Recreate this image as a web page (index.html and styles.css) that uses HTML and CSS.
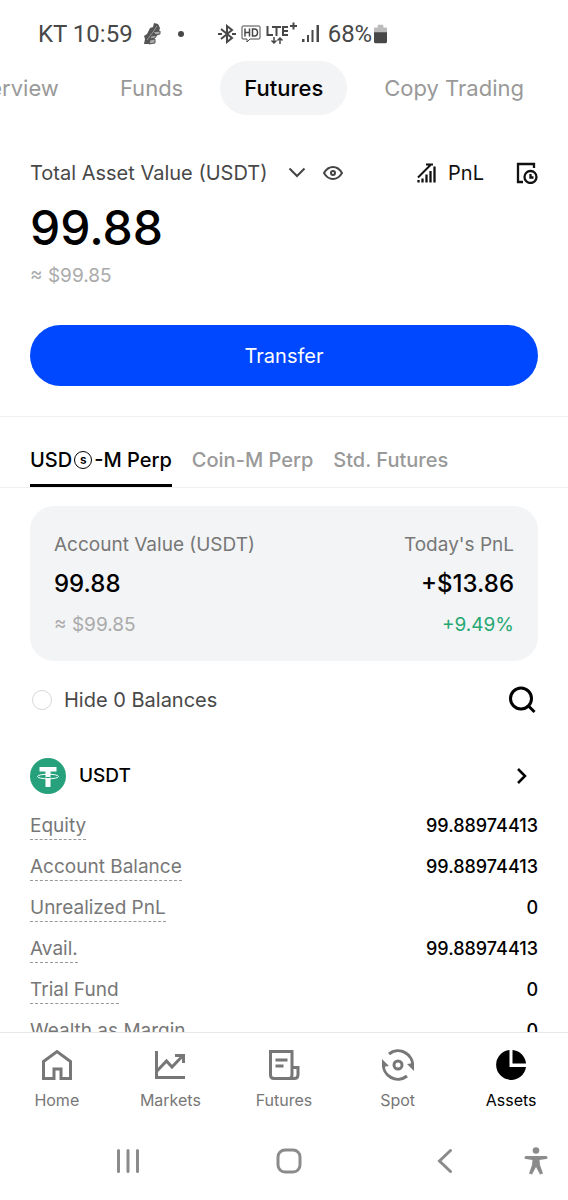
FILE: index.html
```html
<!DOCTYPE html>
<html lang="en">
<head>
<meta charset="utf-8">
<meta name="viewport" content="width=device-width, initial-scale=1">
<title>Futures assets</title>
<link rel="stylesheet" href="styles.css">
</head>
<body>
<div class="app">
  <header class="status">
    <span class="status-text">KT 10:59</span>
    <svg class="shoe" width="20" height="24" viewBox="0 0 20 24" aria-hidden="true"><path d="M11 1l4 1 2 4-2 6-5 5-2 5H1l1-5-1-3 3-2 3-6 3-1z" fill="#555"/><path d="M10 10l7-1v3l-4 1zM8 14l6-1-2 3-5 1zM7 18l5-1v4l-6 1z" fill="#aaa" stroke="#555"/><path d="M4 18l6-8 4-6" stroke="#999" fill="none"/></svg>
    <span class="dot"></span>
    <span class="status-icons">
      <svg width="18" height="20" viewBox="0 0 18 20" fill="none" stroke="#484848" stroke-width="2" aria-hidden="true"><path d="M3 5l11 9-5 4V2l5 4-11 9"/><path d="M0 10h4M14 10h4"/></svg>
      <svg width="20" height="18" viewBox="0 0 20 18" fill="none" stroke="#484848" aria-hidden="true"><path d="M2 1h16q1 0 1 1v11q0 1-1 1H9l-3 3v-3H2q-1 0-1-1V2q0-1 1-1z"/><path d="M4 3.500v8M8.500 3.500v8M4 7.500h4.500M11.500 4v7h2q3 0 3-3.500t-3-3.500z" stroke-width="1.500"/></svg>
      <svg width="31" height="24" viewBox="0 0 31 24" fill="none" stroke="#484848" stroke-width="2" aria-hidden="true"><path d="M1.500 4v9H7M6 5h9M10.500 5v9M22 5h-5v8h5M17 9h5M24 4h7M27.500 .5v7"/><path d="M8 15v6M5.500 18.500L8 21l2.500-2.500M14 22v-6M11.500 18.500L14 16l2.500 2.500" stroke-width="1.500"/></svg>
      <svg width="17" height="18" viewBox="0 0 17 18" fill="#484848" aria-hidden="true"><path d="M0 14h2.500v3H0zM5 10h2v7H5zM9.500 5h2v12h-2zM14.500 0H17v17h-2.500z"/></svg>
    </span>
    <span class="status-text">68%</span>
    <svg width="13" height="20" viewBox="0 0 14 20" aria-hidden="true"><path d="M1 3h3V0h6v3h3q1 0 1 1v5H0V4q0-1 1-1z" fill="#bbb"/><path d="M0 8h14v10q0 2-2 2H2q-2 0-2-2z" fill="#484848"/></svg>
  </header>

  <nav class="pages" aria-label="Account pages">
    <a href="#overview" class="page">Overview</a>
    <a href="#funds" class="page">Funds</a>
    <a href="#futures" class="page page-on" aria-current="page">Futures</a>
    <a href="#copy" class="page">Copy Trading</a>
  </nav>

  <main class="content">
    <section class="total">
      <div class="total-head">
        <button class="plain total-label" type="button">Total Asset Value (USDT)
          <svg width="18" height="12" viewBox="0 0 18 12" fill="none" stroke="#444" stroke-width="2" aria-hidden="true"><path d="M1.500 1.500L9 9l7.500-7.500"/></svg>
        </button>
        <button class="plain eye" type="button" aria-label="Hide values"><svg width="20" height="16" viewBox="0 0 20 16" fill="none" stroke="#444" stroke-width="2" aria-hidden="true"><path d="M1 8q3.500-6 9-6t9 6q-3.500 6-9 6T1 8z"/><circle cx="10" cy="8" r="2"/></svg></button>
        <button class="plain pnl" type="button">
          <svg width="20" height="20" viewBox="0 0 20 20" fill="none" stroke="#111" aria-hidden="true"><path d="M1 14.500L13.500 2M9 1.500h7" stroke-width="2"/><path d="M1.500 17v2.500M5.500 15.500v4M9.500 11.500v8M13.500 8v11.500M17.500 3.500v16" stroke-width="2.300"/></svg>
          PnL</button>
        <button class="plain" type="button" aria-label="History"><svg width="22" height="22" viewBox="0 0 22 22" fill="none" stroke="#111" stroke-width="2.300" aria-hidden="true"><path d="M18 6V2H2v18h5"/><circle cx="14.500" cy="15" r="6"/><path d="M14.500 12v3.500h3"/></svg></button>
      </div>
      <div class="total-value">99.88</div>
      <div class="approx">≈ $99.85</div>
      <button class="transfer" type="button">Transfer</button>
    </section>

    <nav class="tabs" aria-label="Contract type">
      <a href="#usd" class="tab tab-on" aria-current="true">USD<span class="circled">s</span>-M Perp</a>
      <a href="#coin" class="tab">Coin-M Perp</a>
      <a href="#std" class="tab">Std. Futures</a>
    </nav>

    <section class="card">
      <div>
        <div class="card-label">Account Value (USDT)</div>
        <div class="card-value">99.88</div>
        <div class="approx">≈ $99.85</div>
      </div>
      <div class="card-right">
        <div class="card-label">Today's PnL</div>
        <div class="card-value">+$13.86</div>
        <div class="gain">+9.49%</div>
      </div>
    </section>

    <div class="filter">
      <label class="hide"><input class="check" type="checkbox">Hide 0 Balances</label>
      <button class="plain" type="button" aria-label="Search"><svg width="28" height="28" viewBox="0 0 28 28" fill="none" stroke="#000" stroke-width="3" aria-hidden="true"><circle cx="13" cy="12.500" r="10.500"/><path d="M20 19.500l6.500 6.500"/></svg></button>
    </div>

    <a href="#usdt" class="coin">
      <svg width="36" height="36" viewBox="0 0 36 36" aria-hidden="true"><circle cx="18" cy="18" r="18" fill="#26a17b"/><path d="M9.500 9h17v4.500h-6V29h-5V13.500h-6z" fill="#fff"/><ellipse cx="18" cy="18.500" rx="10.500" ry="2.300" fill="none" stroke="#fff"/><path d="M15.500 19.500h5" stroke="#26a17b"/></svg>
      <span class="coin-name">USDT</span>
      <svg width="12" height="18" viewBox="0 0 12 18" fill="none" stroke="#000" stroke-width="2.500" aria-hidden="true"><path d="M2 2l7 7-7 7"/></svg>
    </a>

    <dl class="details">
      <div class="row"><dt>Equity</dt><dd>99.88974413</dd></div>
      <div class="row"><dt>Account Balance</dt><dd>99.88974413</dd></div>
      <div class="row"><dt>Unrealized PnL</dt><dd>0</dd></div>
      <div class="row"><dt>Avail.</dt><dd>99.88974413</dd></div>
      <div class="row"><dt>Trial Fund</dt><dd>0</dd></div>
      <div class="row"><dt>Wealth as Margin</dt><dd>0</dd></div>
    </dl>
  </main>

  <nav class="bottom" aria-label="Main">
    <a href="#home" class="item"><svg width="32" height="32" viewBox="0 0 32 32" fill="none" stroke="#777" stroke-width="3" aria-hidden="true"><path d="M2.500 12.500L16 2.500l13.500 10v17H20V20h-7v9.500H2.500z"/></svg>Home</a>
    <a href="#markets" class="item"><svg width="32" height="32" viewBox="0 0 32 32" fill="none" stroke="#777" stroke-width="3" aria-hidden="true"><path d="M2.500 2v26.500H31M3 22l9.500-10 5.500 6L28 7.500M21 6.500h8.500V14"/></svg>Markets</a>
    <a href="#trade" class="item"><svg width="32" height="32" viewBox="0 0 32 32" fill="none" stroke="#777" stroke-width="3" aria-hidden="true"><path d="M24 18.500V2.500H2.500V26q0 3.500 3.500 3.500h20q4 0 4-4v-7h-6V26q0 3.500-3 3.500M7.500 11h12M7.500 17h8"/></svg>Futures</a>
    <a href="#spot" class="item"><svg width="32" height="32" viewBox="0 0 32 32" fill="none" stroke="#777" stroke-width="3" aria-hidden="true"><path d="M7 5A14.500 14.500 0 0 1 30.500 18M25 27A14.500 14.500 0 0 1 1.500 14"/><circle cx="16" cy="16" r="4"/><path d="M25 15l7-1v8zM7 17l-7 1v-8z" fill="#777" stroke="none"/></svg>Spot</a>
    <a href="#assets" class="item item-on" aria-current="page"><svg width="32" height="32" viewBox="0 0 32 32" aria-hidden="true"><path d="M14.500 1v17H31A15 15 0 1 1 14.500 1z"/><path d="M17.500 1A15 15 0 0 1 31 14.500H17.500z"/></svg>Assets</a>
  </nav>

  <footer class="system">
    <div class="system-keys">
      <button class="plain" type="button" aria-label="Recent apps"><svg width="24" height="26" viewBox="0 0 24 26" stroke="#8b8b8b" stroke-width="3" stroke-linecap="round" aria-hidden="true"><path d="M2.500 2.500v21M12 2.500v21M21.500 2.500v21"/></svg></button>
      <button class="plain" type="button" aria-label="Home screen"><svg width="26" height="26" viewBox="0 0 26 26" fill="none" stroke="#8b8b8b" stroke-width="3" aria-hidden="true"><rect x="2" y="2" width="22" height="22" rx="7"/></svg></button>
      <button class="plain" type="button" aria-label="Back"><svg width="16" height="26" viewBox="0 0 16 26" fill="none" stroke="#8b8b8b" stroke-width="3" stroke-linecap="round" aria-hidden="true"><path d="M13.500 2.500L2.500 13l11 10.500"/></svg></button>
    </div>
    <button class="plain" type="button" aria-label="Accessibility"><svg width="24" height="28" viewBox="0 0 24 28" fill="#8b8b8b" aria-hidden="true"><circle cx="12" cy="3.500" r="3.300"/><path d="M2 9h20q1.500 0 1.500 1.500T22 12l-6.500 1 .5 5 3 8.500-3 1L12 20l-4 7.500-3-1L8 18l.5-5L2 12Q.5 12 .5 10.500T2 9z"/></svg></button>
  </footer>
</div>
</body>
</html>
```
FILE: styles.css
```css
* { box-sizing: border-box; }
body { margin: 0; background: #fff; color: #000; font-family: Inter, "Liberation Sans", sans-serif; font-size: 20px; line-height: 24px; }
a { color: inherit; text-decoration: none; }
svg { display: block; flex: none; }
.app { display: flex; flex-direction: column; height: 100vh; overflow: hidden; }
.plain { display: flex; align-items: center; padding: 0; border: 0; background: none; color: inherit; font: inherit; }

.status { display: flex; align-items: center; flex: none; height: 61px; padding: 6px 38px 0; color: #484848; font-family: Roboto, sans-serif; font-size: 24px; }
.shoe { margin: 0 15px 0 10px; }
.dot { width: 6px; height: 6px; margin-right: 34px; border-radius: 50%; background: #484848; }
.status-icons { display: flex; align-items: center; gap: 5px; margin-right: 9px; }
.status-icons + .status-text { margin-right: 2px; }

.pages { display: flex; justify-content: flex-end; flex: none; gap: 13px; padding-right: 20px; overflow: hidden; color: #999; font-size: 22px; white-space: nowrap; }
.page { padding: 15px 24px; border-radius: 27px; }
.page-on { background: #f3f4f6; color: #000; font-weight: 500; }

.content { flex: 1; min-height: 0; overflow: hidden; }
.total { padding: 44px 30px 30px; border-bottom: 1px solid #f0f0f0; }
.total-head { display: flex; align-items: center; height: 28px; color: #484848; }
.total-label { gap: 21px; }
.eye { margin: 0 auto 0 17px; }
.pnl { gap: 11px; margin-right: 32px; color: #111; }
.total-value { margin-top: 12px; font-size: 48px; font-weight: 500; line-height: 58px; }
.approx { color: #aaa; font-size: 19px; }
.total .approx { margin-top: 7px; }
.transfer { display: block; width: 100%; height: 61px; margin-top: 37px; border: 0; border-radius: 31px; background: #0048ff; color: #fff; font: inherit; }

.tabs { display: flex; gap: 20px; padding: 0 30px; border-bottom: 1px solid #f0f0f0; color: #999; font-size: 20px; font-weight: 500; }
.tab { padding: 31px 0 12px; border-bottom: 3px solid transparent; white-space: nowrap; }
.tab-on { border-color: #000; color: #000; }
.circled { display: inline-block; width: 18px; height: 18px; margin: 0 2px; border: 1px solid #000; border-radius: 50%; font-size: 12px; font-weight: 600; line-height: 15px; text-align: center; vertical-align: 3px; }

.card { display: flex; justify-content: space-between; margin: 18px 30px 0; padding: 27px 24px 24px; border-radius: 24px; background: #f3f4f6; }
.card-right { text-align: right; }
.card-label { color: #777; font-size: 19px; }
.card-value { margin: 11px 0 13px; font-size: 24px; font-weight: 500; line-height: 32px; }
.gain { color: #26a873; font-size: 19px; }

.filter { display: flex; align-items: center; justify-content: space-between; margin-top: 25px; padding: 0 32px; color: #484848; }
.hide { display: flex; align-items: center; gap: 12px; }
.check { width: 20px; height: 20px; margin: 0; appearance: none; border: 1px solid #d8d8d8; border-radius: 50%; background: #fff; }

.coin { display: flex; align-items: center; margin-top: 44px; padding: 0 40px 0 30px; }
.coin-name { flex: 1; margin-left: 13px; font-size: 19px; font-weight: 500; }

.details { margin: 20px 0 0; padding: 0 30px; font-size: 19px; }
.row { display: flex; align-items: flex-start; justify-content: space-between; height: 41px; }
.row dt { padding-bottom: 1px; border-bottom: 1px dashed #999; color: #777; }
.row dd { margin: 0; font-size: 18px; font-weight: 500; }

.bottom { display: flex; flex: none; border-top: 1px solid #e8e8e8; color: #777; font-size: 16px; }
.item { display: flex; flex: 1; flex-direction: column; align-items: center; gap: 7px; padding: 16px 0 8px; }
.item-on { color: #000; }

.system { display: flex; align-items: center; flex: none; gap: 71px; height: 80px; padding: 2px 20px 0 116px; }
.system-keys { display: flex; flex: 1; justify-content: space-between; }
```
